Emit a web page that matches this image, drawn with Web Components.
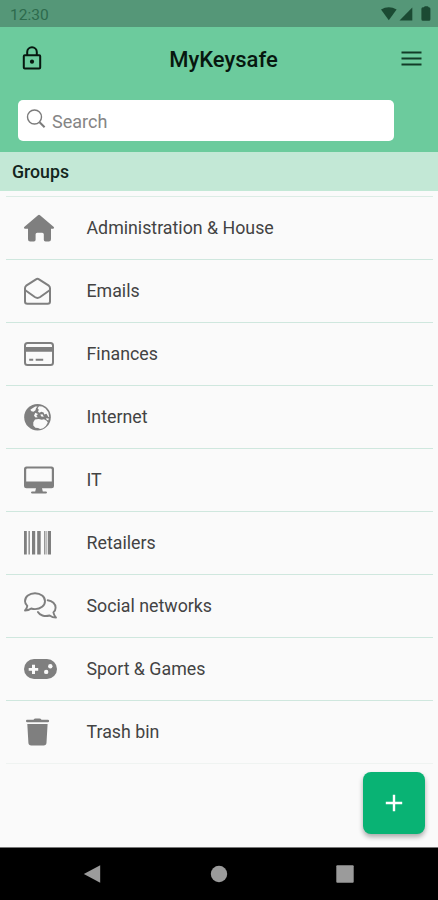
<!DOCTYPE html>
<html lang="en">
<head>
<meta charset="utf-8">
<meta name="viewport" content="width=device-width, initial-scale=1">
<title>MyKeysafe</title>
<style>
  html, body { margin: 0; height: 100%; }
  body { font-family: Roboto, sans-serif; overflow: hidden; }
</style>
</head>
<body>
<keysafe-app></keysafe-app>

<script>
const ICONS = {
  house: '<path fill="currentColor" d="M18 3.200q1-.8 2 0L33.800 15q.9 1.300-.6 1.700H31v10.600q0 2.200-2.200 2.200h-3.300q-1.700 0-1.700-1.700v-5.500q0-1.600-1.600-1.600h-5q-1.600 0-1.600 1.600v5.500q0 1.700-1.700 1.700h-3.700Q8 29.500 8 27.300V16.700H4.800q-1.500-.4-.6-1.700z"/>',
  mail: '<g fill="none" stroke="currentColor" stroke-width="2" stroke-linejoin="round"><path d="M5 13.200q0-1.500 1.200-2.500L16 4.300q1.500-1 3 0l9.800 6.400q1.200 1 1.200 2.500v13.300q0 2.300-2.300 2.300H7.300Q5 28.800 5 26.500z"/><path d="M5 15l9.800 7q2.700 1.800 5.400 0L30 15"/></g>',
  card: '<rect x="5" y="5" width="28" height="22" rx="2.500" fill="none" stroke="currentColor" stroke-width="2"/><path fill="currentColor" d="M5 9h28v4.700H5zM9.200 20.700h4v2h-4zM15.700 20.700h7.500v2h-7.500z"/>',
  globe: '<circle cx="17.500" cy="16.200" r="13.300" fill="currentColor"/><g fill="#fafafa"><path d="M12.500 7.300l2.800-1.900 2.200.2-1.500 1.700-.5 2-2 1.400-2-.4-1.200-1.500z"/><path d="M19 5.300l3.200.3 3.300 2 2.800 3.600.9 4.500-.8.3-1.900-3.200-2.200.8-.7-2.200-2.200-.7-1.900 1-1.500-1 .8-1.900-1.200-1.500z"/><path d="M15.200 11.700l2.800 1.300-1.700 1.700 1.500 1.500-2.300.3-1.500-1.800zM20.300 13.500l2.200-.2 1.300 2.500-2.500-.3z"/><path d="M13.300 21.300l1.700-2.700 3.700-.7 3.100.9 2.200-.6 2.600 1.600 1.200 1.800-2 3.300-2.700 2.300-3 .9-2-1.200-2.700-.1-2.100-2.200z"/><path d="M26 17.200l2.800.3-.5 2-1.600-.7z"/></g>',
  monitor: '<path fill="currentColor" fill-rule="evenodd" d="M6.500 2.500h25Q34 2.500 34 5v16.800q0 2.500-2.500 2.500H22l.8 3.200h3q1.200 0 1.200 1t-1.200 1H12.200q-1.200 0-1.200-1t1.200-1h3l.8-3.200H6.500Q4 24.300 4 21.800V5q0-2.500 2.500-2.500zM7.300 4.500q-1.100 0-1.100 1.100v12h25.600v-12q0-1.100-1.100-1.100z"/>',
  barcode: '<path fill="currentColor" d="M4 4h2.800v23.500H4zM8.500 4h1.300v23.500H8.500zM12 4h3.200v23.500H12zM17.200 4h3.500v23.500h-3.500zM24.200 4h1.200v23.500h-1.200zM28 4h3v23.500h-3zM26.500 4h.7v23.500h-.7z"/>',
  chats: '<g fill="none" stroke="currentColor" stroke-width="1.900" stroke-linejoin="round" stroke-linecap="round"><path d="M15 3.300c5.700 0 10 3.500 10 7.900s-4.300 7.900-10 7.900q-2 0-3.800-.6-2.700 2-6.200 2 2-2.100 2.300-4.600Q5 13.700 5 11.200C5 6.800 9.300 3.300 15 3.300z"/><path d="M27.700 10.300c4.700.5 7.900 3.700 7.900 7.400q0 2.600-2.200 4.700.4 2.600 2.600 5.200-3.500-.1-6.400-2.100c-5.200 1.500-9.900-.4-11.700-3.500"/></g>',
  gamepad: '<rect x="4" y="6" width="33" height="20" rx="10" fill="currentColor"/><path fill="#fafafa" d="M12 11.700h3V15h3.200v2.800H15V21h-3v-3.200H8.700V15H12z"/><circle cx="26.200" cy="18.900" r="2.200" fill="#fafafa"/><circle cx="30.300" cy="13.300" r="2.200" fill="#fafafa"/>',
  trash: '<path fill="currentColor" d="M13.500 3.700q.7-1.300 2-1.300h4q1.300 0 2 1.300h6.300q1.300 0 1.300 1.200T27.800 6.200H7.200Q6 6.200 6 4.900t1.200-1.200zM7.300 8h20.300l-1.100 18.800q-.2 2.700-2.800 2.700H11.200q-2.600 0-2.800-2.700z"/>'
};

class StatusBar extends HTMLElement {
  constructor() {
    super();
    this.attachShadow({ mode: 'open' });
    this.shadowRoot.innerHTML = `
      <style>
        :host {
          display: flex;
          align-items: center;
          justify-content: space-between;
          box-sizing: border-box;
          height: 27px;
          padding: 2px 0 0 10px;
          background: #559778;
          color: #2d6b4d;
          font-size: 15.500px;
        }
        svg { display: block; }
      </style>
      <span>12:30</span>
      <svg width="60" height="25" viewBox="0 0 60 25" fill="#1b4a33">
        <path d="M3 7.500Q10.800 3 18.600 7.500L10.800 18.300z"/>
        <path d="M34.300 5.500v13H21.500z"/>
        <path d="M44.500 5.300h1.500q.2-1 1.200-1h2.200q1 0 1.200 1h.3q1.500 0 1.500 1.500v10.400q0 1.500-1.500 1.500h-6q-1.500 0-1.500-1.500V6.800q0-1.500 1.500-1.500z"/>
      </svg>
    `;
  }
}

class AppHeader extends HTMLElement {
  constructor() {
    super();
    this.attachShadow({ mode: 'open' });
    this.shadowRoot.innerHTML = `
      <style>
        :host {
          display: block;
          box-sizing: border-box;
          height: 125px;
          background: #6ccb9d;
          color: #07170f;
        }
        .bar {
          display: grid;
          grid-template-columns: 64px 1fr 54px;
          align-items: center;
          height: 64px;
          margin-bottom: 9px;
        }
        h1 {
          margin: 0 0 0 -1px;
          text-align: center;
          font-size: 22px;
          font-weight: 500;
        }
        svg { display: block; }
      </style>
      <div class="bar">
        <svg width="64" height="64" viewBox="0 0 64 64" fill="none" stroke="currentColor" stroke-width="2">
          <rect x="23.800" y="28.300" width="16.400" height="13.200" rx="1"/>
          <path d="M27.200 28v-3a4.800 4.800 0 0 1 9.600 0v3"/>
          <circle cx="32" cy="34.700" r="2.100" fill="currentColor" stroke="none"/>
        </svg>
        <h1><slot></slot></h1>
        <svg width="54" height="64" viewBox="0 0 54 64" fill="none" stroke="#123c28" stroke-width="2">
          <path d="M17.500 25.500h20M17.500 31.500h20M17.500 37.500h20"/>
        </svg>
      </div>
      <slot name="search"></slot>
    `;
  }
}

class SearchField extends HTMLElement {
  constructor() {
    super();
    this.attachShadow({ mode: 'open' });
    this.shadowRoot.innerHTML = `
      <style>
        :host {
          display: flex;
          align-items: center;
          box-sizing: border-box;
          width: 376px;
          height: 41px;
          margin-left: 18px;
          border-radius: 5px;
          background: #fff;
          color: #858585;
          font-size: 18px;
        }
        svg { display: block; flex: none; }
        span { padding-top: 2px; }
      </style>
      <svg width="34" height="41" viewBox="0 0 34 41" fill="none" stroke="#7b7b7b">
        <circle cx="16.500" cy="17" r="7" stroke-width="1.400"/>
        <path d="M21.600 22.200l5 5" stroke-width="2"/>
      </svg>
      <span><slot></slot></span>
    `;
  }
}

class SectionTitle extends HTMLElement {
  constructor() {
    super();
    this.attachShadow({ mode: 'open' });
    this.shadowRoot.innerHTML = `
      <style>
        :host {
          display: flex;
          align-items: center;
          box-sizing: border-box;
          height: 39px;
          padding-left: 12px;
          background: #c3e8d6;
          color: #14251d;
          font-size: 17.700px;
          font-weight: 500;
        }
      </style>
      <slot></slot>
    `;
  }
}

class GroupItem extends HTMLElement {
  connectedCallback() {
    this.attachShadow({ mode: 'open' });
    this.shadowRoot.innerHTML = `
      <style>
        :host {
          display: flex;
          align-items: center;
          box-sizing: border-box;
          height: 63px;
          padding-left: 14px;
          border-bottom: 1px solid #cfe7de;
          color: #434343;
          font-size: 17.800px;
        }
        :host(:last-child) { border-bottom-color: #eff3f1; }
        svg {
          display: block;
          flex: none;
          margin-right: 26.500px;
          color: #7f7f7f;
        }
        span { padding-bottom: 1px; }
      </style>
      <svg width="40" height="32" viewBox="0 0 40 32">${ICONS[this.getAttribute('icon')]}</svg>
      <span><slot></slot></span>
    `;
  }
}

class GroupList extends HTMLElement {
  constructor() {
    super();
    this.attachShadow({ mode: 'open' });
    this.shadowRoot.innerHTML = `
      <style>
        :host {
          display: block;
          margin: 5px 5px 0 6px;
          border-top: 1px solid #dcece5;
        }
      </style>
      <slot></slot>
    `;
  }
}

class AddButton extends HTMLElement {
  constructor() {
    super();
    this.attachShadow({ mode: 'open' });
    this.shadowRoot.innerHTML = `
      <style>
        :host { display: block; }
        button {
          display: flex;
          align-items: center;
          justify-content: center;
          width: 62px;
          height: 62px;
          padding: 0;
          border: none;
          border-radius: 8px;
          background: #09b374;
          box-shadow: 0 3px 5px rgba(0, 0, 0, 0.32);
        }
      </style>
      <button aria-label="Add">
        <svg width="18" height="18" viewBox="0 0 18 18" stroke="#fff" stroke-width="2.400">
          <path d="M9 .8v16.400M.8 9h16.400"/>
        </svg>
      </button>
    `;
  }
}

class NavBar extends HTMLElement {
  constructor() {
    super();
    this.attachShadow({ mode: 'open' });
    this.shadowRoot.innerHTML = `
      <style>
        :host {
          display: flex;
          align-items: center;
          justify-content: space-between;
          box-sizing: border-box;
          height: 53px;
          padding: 0 84px 0 83px;
          border-top: 1px solid #777;
          background: #000;
        }
        svg { display: block; }
      </style>
      <svg width="18" height="18" viewBox="0 0 18 18" fill="#9b9b9b"><path d="M.8 9L17.200.200v17.600z"/></svg>
      <svg width="18" height="18" viewBox="0 0 18 18" fill="#9b9b9b"><circle cx="9" cy="9" r="8.200"/></svg>
      <svg width="18" height="18" viewBox="0 0 18 18" fill="#9b9b9b"><rect x=".3" y=".3" width="17.400" height="17.400" rx="1"/></svg>
    `;
  }
}

class KeysafeApp extends HTMLElement {
  constructor() {
    super();
    this.attachShadow({ mode: 'open' });
    this.shadowRoot.innerHTML = `
      <style>
        :host {
          display: flex;
          flex-direction: column;
          position: relative;
          height: 100vh;
          background: #fafafa;
        }
        main { flex: 1; min-height: 0; }
        add-button {
          position: absolute;
          right: 13.500px;
          bottom: 66.500px;
        }
      </style>
      <status-bar></status-bar>
      <app-header>MyKeysafe<search-field slot="search">Search</search-field></app-header>
      <main>
        <section-title>Groups</section-title>
        <group-list>
          <group-item icon="house">Administration &amp; House</group-item>
          <group-item icon="mail">Emails</group-item>
          <group-item icon="card">Finances</group-item>
          <group-item icon="globe">Internet</group-item>
          <group-item icon="monitor">IT</group-item>
          <group-item icon="barcode">Retailers</group-item>
          <group-item icon="chats">Social networks</group-item>
          <group-item icon="gamepad">Sport &amp; Games</group-item>
          <group-item icon="trash">Trash bin</group-item>
        </group-list>
      </main>
      <add-button></add-button>
      <nav-bar></nav-bar>
    `;
  }
}

customElements.define('status-bar', StatusBar);
customElements.define('app-header', AppHeader);
customElements.define('search-field', SearchField);
customElements.define('section-title', SectionTitle);
customElements.define('group-item', GroupItem);
customElements.define('group-list', GroupList);
customElements.define('add-button', AddButton);
customElements.define('nav-bar', NavBar);
customElements.define('keysafe-app', KeysafeApp);
</script>
</body>
</html>
